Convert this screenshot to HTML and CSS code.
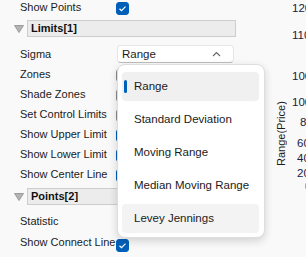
FILE: index.html
```html
<!DOCTYPE html>
<html lang="en">
<head>
    <meta charset="UTF-8">
    <title>Control Chart Properties</title>
    <link rel="stylesheet" href="styles.css">
</head>
<body>
    <div class="page">
        <div class="panel">
            <div class="row">
                <span class="label">Show Points</span>
                <span class="check on"></span>
            </div>

            <div class="group">
                <svg class="toggle" width="10" height="8" viewBox="0 0 10 8"><polygon points="0.5,0.5 9.5,0.5 5,7.5" fill="#b4b4b4" stroke="#9c9c9c" stroke-width="1"/></svg>
                <div class="group-title">Limits[1]</div>
            </div>

            <div class="row row-select">
                <span class="label">Sigma</span>
                <div class="select">
                    <span>Range</span>
                    <svg class="chevron" width="9" height="6" viewBox="0 0 9 6"><polyline points="1,5 4.5,1.5 8,5" fill="none" stroke="#6b6b6b" stroke-width="1.2"/></svg>
                </div>
            </div>
            <div class="row">
                <span class="label">Zones</span>
                <span class="check"></span>
            </div>
            <div class="row">
                <span class="label">Shade Zones</span>
                <span class="check"></span>
            </div>
            <div class="row">
                <span class="label">Set Control Limits</span>
                <span class="check"></span>
            </div>
            <div class="row">
                <span class="label">Show Upper Limit</span>
                <span class="check on"></span>
            </div>
            <div class="row">
                <span class="label">Show Lower Limit</span>
                <span class="check on"></span>
            </div>
            <div class="row">
                <span class="label">Show Center Line</span>
                <span class="check on"></span>
            </div>

            <div class="group group-second">
                <svg class="toggle" width="10" height="8" viewBox="0 0 10 8"><polygon points="0.5,0.5 9.5,0.5 5,7.5" fill="#b4b4b4" stroke="#9c9c9c" stroke-width="1"/></svg>
                <div class="group-title">Points[2]</div>
            </div>

            <div class="row row-stat">
                <span class="label">Statistic</span>
            </div>
            <div class="row">
                <span class="label">Show Connect Line</span>
                <span class="check on low"></span>
            </div>

            <!-- open dropdown of Sigma -->
            <ul class="dropdown">
                <li class="item selected">Range</li>
                <li class="item">Standard Deviation</li>
                <li class="item">Moving Range</li>
                <li class="item">Median Moving Range</li>
                <li class="item hover">Levey Jennings</li>
            </ul>
        </div>

        <div class="chart">
            <div class="axis-title">Range(Price)</div>
            <span class="tick" style="top: 2px; left: 22px;">120</span>
            <span class="tick" style="top: 29px; left: 22px;">110</span>
            <span class="tick" style="top: 70px; left: 22px;">100</span>
            <span class="tick" style="top: 96px; left: 22px;">100</span>
            <span class="tick" style="top: 116px; left: 30px;">80</span>
            <span class="tick" style="top: 137px; left: 27px;">60</span>
            <span class="tick" style="top: 152px; left: 27px;">40</span>
            <span class="tick" style="top: 167px; left: 27px;">20</span>
            <span class="dot"></span>
        </div>
    </div>
</body>
</html>
```

FILE: styles.css
```css
/* base */
html, body {
    margin: 0;
    padding: 0;
    width: 306px;
    height: 257px;
    overflow: hidden;
    background-color: #f9f9f9;
    font-family: "Liberation Sans", Arial, sans-serif;
    font-size: 11px;
    color: #1b1b1b;
}

.page {
    display: flex;
    margin-top: -3px;
}

/* property panel */
.panel {
    position: relative;
    width: 270px;
    flex: none;
}

.row {
    display: flex;
    align-items: center;
    height: 20px;
}

.label {
    width: 96px;
    padding-left: 20px;
    white-space: nowrap;
}

.check {
    width: 11px;
    height: 11px;
    border: 1px solid #8a8a8a;
    border-radius: 3px;
    background-color: #fdfdfd;
    margin-top: 2px;
}

.check.on {
    border-color: #005fb8;
    background-color: #005fb8;
    background-image: url("data:image/svg+xml;utf8,<svg xmlns='http://www.w3.org/2000/svg' width='11' height='11' viewBox='0 0 11 11'><polyline points='2.5,5.8 4.5,7.6 8.5,3.6' fill='none' stroke='white' stroke-width='1.2'/></svg>");
}

.check.low {
    margin-top: 6px;
}

/* group header */
.group {
    display: flex;
    align-items: center;
    padding: 3px 0;
}

.group-second {
    padding: 4px 0 5px;
}

.toggle {
    margin-left: 14px;
    margin-right: 3px;
    margin-top: 1px;
}

.group-title {
    width: 204px;
    height: 15px;
    line-height: 15px;
    padding-left: 3px;
    border: 1px solid #cdcdcd;
    background-color: #ececec;
    font-weight: bold;
    color: #111;
}

/* select field */
.row-select {
    height: 21px;
    padding-top: 3px;
}

.select {
    display: flex;
    align-items: center;
    justify-content: space-between;
    box-sizing: border-box;
    width: 117px;
    height: 18px;
    margin-left: 1px;
    padding: 0 12px 0 4px;
    background-color: #fff;
    border: 1px solid #e6e6e6;
    border-bottom-color: #bdbdbd;
    border-radius: 4px;
    font-size: 11.5px;
}

.row-stat {
    height: 22px;
}

/* open dropdown */
.dropdown {
    position: absolute;
    top: 67px;
    left: 117px;
    width: 137px;
    margin: 0;
    padding: 7px 5px 4px 4px;
    list-style: none;
    background-color: #fff;
    border: 1px solid #dedede;
    border-radius: 8px;
    box-shadow: 0 3px 8px rgba(0, 0, 0, 0.16);
    font-size: 11.5px;
}

.item {
    position: relative;
    height: 29px;
    line-height: 29px;
    padding-left: 12px;
    margin-bottom: 4px;
    border-radius: 4px;
    white-space: nowrap;
}

.item:last-child {
    margin-bottom: 0;
}

.item.selected {
    background-color: #f0f0f0;
}

.item.selected::before {
    content: "";
    position: absolute;
    left: 2px;
    top: 8px;
    width: 3px;
    height: 13px;
    border-radius: 2px;
    background-color: #005fb8;
}

.item.hover {
    background-color: #f3f3f3;
}

/* chart at the right */
.chart {
    position: relative;
    flex: 1;
    height: 260px;
    margin-top: 3px;
}

.axis-title {
    position: absolute;
    left: 5px;
    top: 108px;
    width: 12px;
    height: 58px;
    writing-mode: vertical-rl;
    transform: rotate(180deg);
    white-space: nowrap;
    line-height: 12px;
}

.tick {
    position: absolute;
    line-height: 12px;
    font-size: 11.5px;
    color: #1a2040;
}

.dot {
    position: absolute;
    left: 35px;
    top: 183px;
    width: 3px;
    height: 6px;
    border-radius: 2px;
    background-color: #f0a030;
}
```
